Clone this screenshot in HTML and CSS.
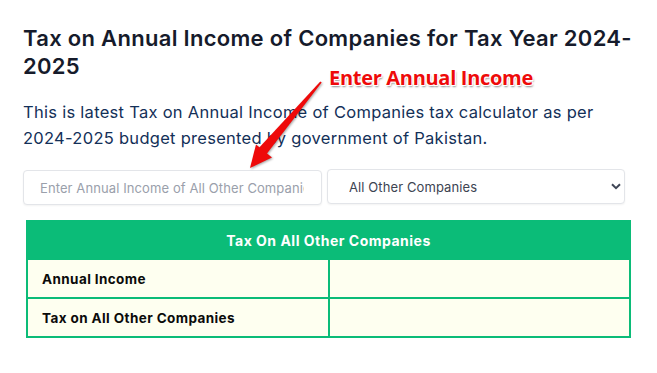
FILE: index.html
```html
<!DOCTYPE html>
<html lang="en">
<head>
<meta charset="utf-8">
<title>Tax on Annual Income of Companies</title>
<link rel="stylesheet" href="styles.css">
</head>
<body>
<main class="page">
  <h1 class="title">Tax on Annual Income of Companies for Tax Year 2024-2025</h1>
  <p class="lead">This is latest Tax on Annual Income of Companies tax calculator as per 2024-2025 budget presented by government of Pakistan.</p>
  <div class="controls">
    <input class="income" type="text" placeholder="Enter Annual Income of All Other Companies">
    <div class="select-wrap">
      <select class="kind">
        <option>All Other Companies</option>
      </select>
      <svg class="chevron" viewBox="0 0 10 7" width="10" height="7"><path d="M1 1.2 L5 5.2 L9 1.2" fill="none" stroke="#3f4656" stroke-width="2"/></svg>
    </div>
  </div>
  <table class="tax-table">
    <thead>
      <tr><th colspan="2">Tax On All Other Companies</th></tr>
    </thead>
    <tbody>
      <tr><td class="label">Annual Income</td><td class="value"></td></tr>
      <tr><td class="label">Tax on All Other Companies</td><td class="value"></td></tr>
    </tbody>
  </table>
</main>
<div class="annotation">
  <span class="annotation-text">Enter Annual Income</span>
  <svg class="arrow" width="657" height="373" viewBox="0 0 657 373">
    <g fill="#ee0a0a">
      <polygon points="320.3,81.5 321.7,82.5 266.2,154.6 258.6,148.2"/>
      <polygon points="250,168 256,144.5 272,157.5"/>
    </g>
  </svg>
</div>
</body>
</html>
```
FILE: styles.css
```css
* { box-sizing: border-box; }
html, body { margin: 0; padding: 0; background: #ffffff; }
body { font-family: Inter, "Open Sans", "Liberation Sans", sans-serif; }

.page {
  width: 640px;
  padding: 24px 0 0 23px;
}

.title {
  margin: 0;
  font-size: 22px;
  line-height: 28px;
  font-weight: 600;
  color: #161b2b;
  letter-spacing: 0.3px;
}

.lead {
  margin: 19px 0 0;
  width: 600px;
  font-size: 16.5px;
  line-height: 26px;
  font-weight: 400;
  color: #133058;
  letter-spacing: 0.28px;
}

.controls {
  display: flex;
  gap: 5px;
  margin-top: 18px;
  width: 602px;
}

.income {
  width: 299px;
  height: 35px;
  border: 1px solid #e3e5e9;
  border-radius: 4px;
  padding: 0 17px 0 16px;
  font-family: inherit;
  font-size: 13px;
  letter-spacing: 0.1px;
  color: #333;
  box-shadow: 0 1px 2px rgba(0,0,0,0.05);
  outline: none;
  margin-top: 1px;
}
.income::placeholder { color: #9aa0ab; }

.select-wrap {
  position: relative;
  width: 298px;
  height: 35px;
}
.kind {
  appearance: none;
  -webkit-appearance: none;
  width: 100%;
  height: 100%;
  border: 1px solid #e3e5e9;
  border-radius: 4px;
  background: #fff;
  padding: 0 20px 0 21px;
  font-family: inherit;
  font-size: 13px;
  letter-spacing: 0.1px;
  color: #3d4452;
  box-shadow: 0 1px 2px rgba(0,0,0,0.05);
}
.chevron {
  position: absolute;
  right: 4px;
  top: 14px;
}

.tax-table {
  margin: 15px 0 0 3px;
  width: 605px;
  border-collapse: collapse;
}
.tax-table th {
  background: #0bbc78;
  color: #ffffff;
  font-size: 14px;
  font-weight: 700;
  letter-spacing: 0.5px;
  height: 38px;
  padding: 0;
  text-align: center;
  border: 2px solid #0bbc78;
  border-radius: 3px 3px 0 0;
}
.tax-table td {
  background: #fefff0;
  border: 2px solid #0bbc78;
  height: 39px;
  padding: 0 14px;
  font-size: 13.5px;
  letter-spacing: 0.4px;
  font-weight: 700;
  color: #0b0b0b;
}
.tax-table td.label { width: 302px; }

.annotation {
  position: absolute;
  left: 0;
  top: 0;
  width: 657px;
  height: 373px;
  pointer-events: none;
}
.annotation-text {
  position: absolute;
  left: 329px;
  top: 64px;
  font-family: "Open Sans", "Liberation Sans", sans-serif;
  font-weight: 700;
  font-size: 20px;
  letter-spacing: -0.3px;
  color: #ee0a0a;
  text-shadow: -1px -1px 0 #fff, 1px -1px 0 #fff, -1px 1px 0 #fff, 1px 1px 0 #fff, 1px 2px 2px rgba(0,0,0,0.45);
  white-space: nowrap;
}
.arrow {
  position: absolute;
  left: 0;
  top: 0;
  filter: drop-shadow(1px 1px 1px rgba(0,0,0,0.35));
}
```
